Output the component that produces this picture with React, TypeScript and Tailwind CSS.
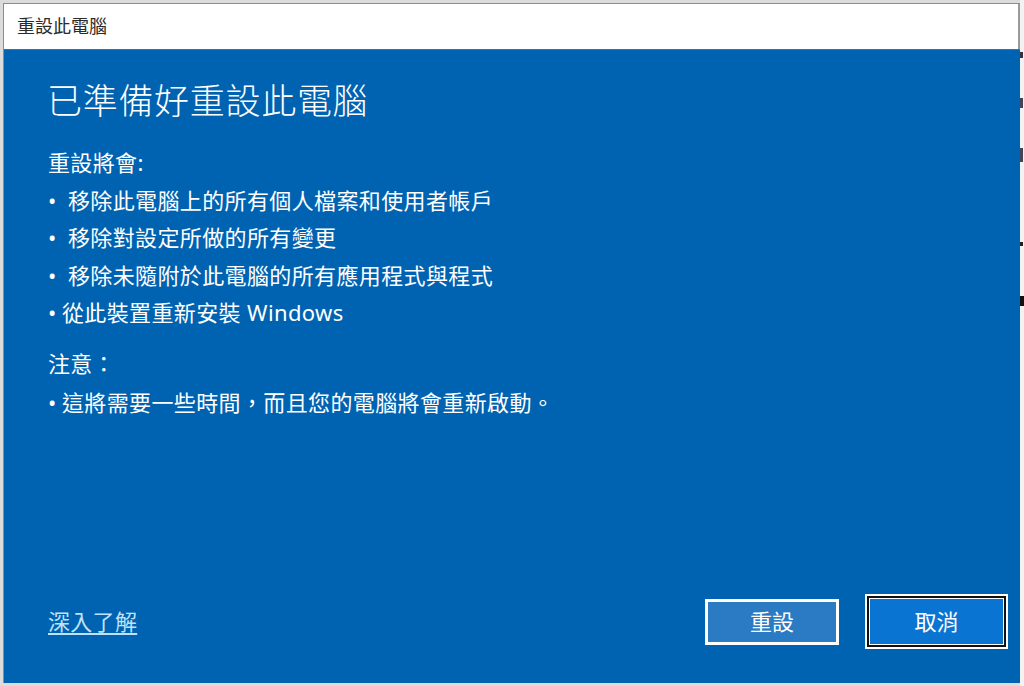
import React from 'react';

const font = { fontFamily: '"Noto Sans", "Noto Sans CJK TC", sans-serif' };

const Bullet = ({ text, wide = true }: { text: React.ReactNode; wide?: boolean }) => (
  <div className="flex h-[37.5px] items-center leading-[37.5px]">
    <span className={wide ? 'w-[20px] shrink-0' : 'w-[14px] shrink-0'}>•</span>
    <span>{text}</span>
  </div>
);

export default function App() {
  return (
    <div className="flex h-[686px] w-[1024px] overflow-hidden bg-[#dcdcdc]" style={font}>
      <div className="flex flex-col pl-[3px] pt-[3px]">
        <div className="flex h-[680px] w-[1017px] flex-col border-l border-t border-[#8c8c8c]">
          {/* title bar */}
          <div className="flex h-[45px] items-center border-r-2 border-[#9a9a9a] bg-white pl-[13px] text-[18px] text-[#2b2b2b]">
            重設此電腦
          </div>

          {/* body */}
          <div className="flex flex-1 flex-col border-t border-[#1f7ac4] bg-[#0063b1] pl-[44px] pr-[12px] pb-[34px] pt-[27px] text-white">
            <h1 className="-ml-[1px] text-[35px] font-light leading-[48px] tracking-[0.7px]">已準備好重設此電腦</h1>

            <div className="mt-[19px] text-[22px] tracking-[0.37px]">
              <div className="h-[37.5px] leading-[37.5px]">重設將會:</div>
              <Bullet text="移除此電腦上的所有個人檔案和使用者帳戶" />
              <Bullet text="移除對設定所做的所有變更" />
              <Bullet text="移除未隨附於此電腦的所有應用程式與程式" />
              <Bullet wide={false} text="從此裝置重新安裝 Windows" />

              <div className="mt-[13px] h-[37.5px] leading-[37.5px]">注意：</div>
              <div className="mt-[2px]">
                <Bullet wide={false} text="這將需要一些時間，而且您的電腦將會重新啟動。" />
              </div>
            </div>

            <div className="mt-auto flex items-center">
              <a className="text-[22px] tracking-[0.3px] text-[#bfe2fa] underline underline-offset-[3px]">深入了解</a>
              <div className="ml-auto flex items-center gap-[26px]">
                <button className="flex h-[46px] w-[134px] items-center justify-center border-[3px] border-white bg-[#2a7bc4] text-[22px] text-white">
                  重設
                </button>
                <button className="h-[55px] w-[143px] border-2 border-white p-0">
                  <div className="h-full w-full border-2 border-[#111]">
                    <div className="flex h-full w-full items-center justify-center border border-white bg-[#0a74d2] text-[22px] text-white">
                      取消
                    </div>
                  </div>
                </button>
              </div>
            </div>
          </div>
        </div>
      </div>

      {/* sliver of the window behind */}
      <div className="flex flex-1 flex-col bg-[#f2f2f2] pt-[52px]">
        <div className="h-[6px] w-[3px] bg-[#334]" />
        <div className="mt-[40px] h-[10px] w-[3px] bg-[#445]" />
        <div className="mt-[40px] h-[14px] w-[3px] bg-[#445]" />
        <div className="mt-[80px] h-[4px] w-[3px] bg-[#222]" />
        <div className="mt-[50px] h-[10px] w-[4px] bg-[#111]" />
      </div>
    </div>
  );
}
